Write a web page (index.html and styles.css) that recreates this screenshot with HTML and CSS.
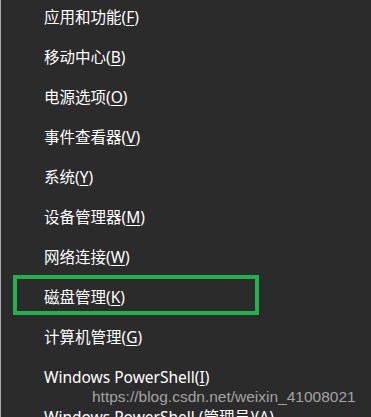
FILE: index.html
```html
<!DOCTYPE html>
<html>
<head>
<meta charset="utf-8">
<link rel="stylesheet" href="styles.css">
</head>
<body>
<div class="menu">
  <div class="item">应用和功能(<u>F</u>)</div>
  <div class="item">移动中心(<u>B</u>)</div>
  <div class="item">电源选项(<u>O</u>)</div>
  <div class="item">事件查看器(<u>V</u>)</div>
  <div class="item">系统(<u>Y</u>)</div>
  <div class="item">设备管理器(<u>M</u>)</div>
  <div class="item">网络连接(<u>W</u>)</div>
  <div class="item marked">磁盘管理(<u>K</u>)</div>
  <div class="item">计算机管理(<u>G</u>)</div>
  <div class="item">Windows PowerShell(<u>I</u>)</div>
  <div class="item">Windows PowerShell (管理员)(<u>A</u>)</div>
</div>
<div class="watermark">https://blog.csdn.net/weixin_41008021</div>
</body>
</html>
```
FILE: styles.css
```css
html, body {
  margin: 0;
  padding: 0;
  background: #2b2b2b;
  height: 100%;
  overflow: hidden;
}
body {
  position: relative;
  border-left: 1px solid #a8a8a8;
  box-sizing: border-box;
}
.menu {
  margin-top: -3px;
  display: flex;
  flex-direction: column;
}
.item {
  position: relative;
  height: 40px;
  line-height: 40px;
  padding-left: 43px;
  color: #ffffff;
  font-family: "Noto Sans", "Noto Sans CJK SC", sans-serif;
  font-size: 15.5px;
  white-space: nowrap;
}
.item u {
  text-decoration-thickness: 1px;
  text-underline-offset: 2px;
}
.marked::after {
  content: "";
  position: absolute;
  left: 12px;
  top: -2px;
  width: 246px;
  height: 40px;
  box-sizing: border-box;
  border: 4px solid #22b14c;
}
.watermark {
  position: absolute;
  left: 91px;
  top: 388px;
  color: #a3a3a3;
  font-family: "Liberation Sans", Arial, sans-serif;
  font-size: 15.5px;
  white-space: nowrap;
}
```
